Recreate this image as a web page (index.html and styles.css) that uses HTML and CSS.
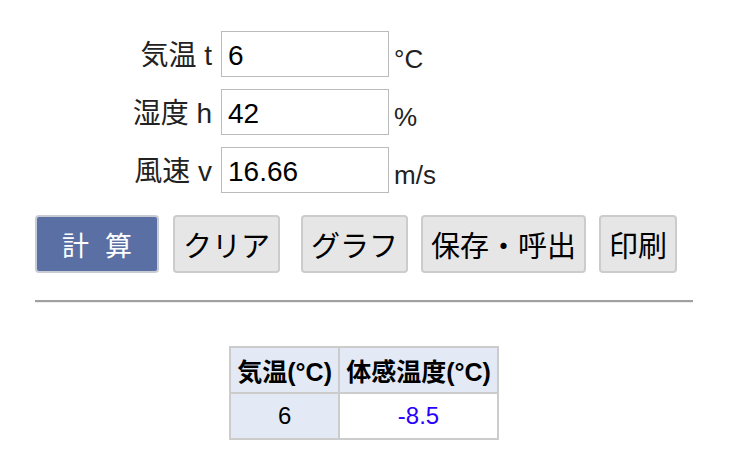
FILE: index.html
```html
<!DOCTYPE html>
<html lang="ja">
<head>
    <meta charset="UTF-8">
    <meta name="viewport" content="width=device-width, initial-scale=1.0">
    <title>体感温度の計算</title>
    <link rel="stylesheet" href="styles.css">
</head>
<body>
    <div class="page">
        <div class="form">
            <label class="label" for="temp">気温 t</label>
            <input class="field" type="text" id="temp" value="6">
            <span class="unit">°C</span>

            <label class="label" for="humid">湿度 h</label>
            <input class="field" type="text" id="humid" value="42">
            <span class="unit">%</span>

            <label class="label" for="wind">風速 v</label>
            <input class="field" type="text" id="wind" value="16.66">
            <span class="unit">m/s</span>
        </div>

        <div class="buttons">
            <button class="btn btn-main">計 算</button>
            <button class="btn">クリア</button>
            <button class="btn btn-graph">グラフ</button>
            <button class="btn">保存・呼出</button>
            <button class="btn">印刷</button>
        </div>

        <hr class="sep">

        <table class="result">
            <tr>
                <th>気温(°C)</th>
                <th>体感温度(°C)</th>
            </tr>
            <tr>
                <td class="cell-in">6</td>
                <td class="cell-out">-8.5</td>
            </tr>
        </table>
    </div>
</body>
</html>
```

FILE: styles.css
```css
body {
    margin: 0;
    background: #fff;
    color: #000;
    font-family: "Liberation Sans", "Noto Sans CJK JP", sans-serif;
}
.page {
    width: 658px;
    padding: 31px 0 0 35px;
}
.form {
    display: grid;
    grid-template-columns: 177px 168px auto;
    column-gap: 9px;
    row-gap: 12px;
    align-items: end;
}
.label {
    font-size: 28px;
    color: #222;
    text-align: right;
    align-self: center;
    padding-bottom: 2px;
}
.field {
    box-sizing: border-box;
    width: 168px;
    height: 46px;
    margin: 0;
    padding: 4px 6px 0;
    border: 1px solid #bbb;
    font-family: "Liberation Sans", sans-serif;
    font-size: 28px;
    color: #000;
}
.unit {
    font-size: 26px;
    color: #222;
    margin-left: -4px;
    margin-bottom: 2px;
}
.buttons {
    display: flex;
    gap: 13px;
    margin-top: 22px;
}
.btn {
    box-sizing: border-box;
    height: 58px;
    padding: 0 8px;
    border: 2px solid #ccc;
    border-radius: 4px;
    background: #e6e6e6;
    font-family: "Noto Sans CJK JP", sans-serif;
    font-size: 29px;
    color: #000;
}
.btn-main {
    width: 124px;
    margin-right: 1px;
    background: #5a70a4;
    border-color: #c8ccd6;
    color: #fff;
    font-size: 27px;
    word-spacing: 10px;
}
.btn-graph {
    margin-left: 8px;
}
.sep {
    margin: 27px 0 0;
    height: 0;
    border: 0;
    border-top: 2px solid #a0a0a0;
    border-bottom: 1px solid #eee;
}
.result {
    margin: 43px auto 0;
    border-collapse: collapse;
    font-size: 25px;
}
.result th,
.result td {
    height: 44px;
    padding: 0 6px;
    border: 2px solid #ccc;
    text-align: center;
}
.result th {
    background: #e3eaf6;
}
.result td {
    font-size: 24px;
}
.cell-in {
    width: 95px;
    background: #e3eaf6;
}
.cell-out {
    color: #2a00ff;
}
```
